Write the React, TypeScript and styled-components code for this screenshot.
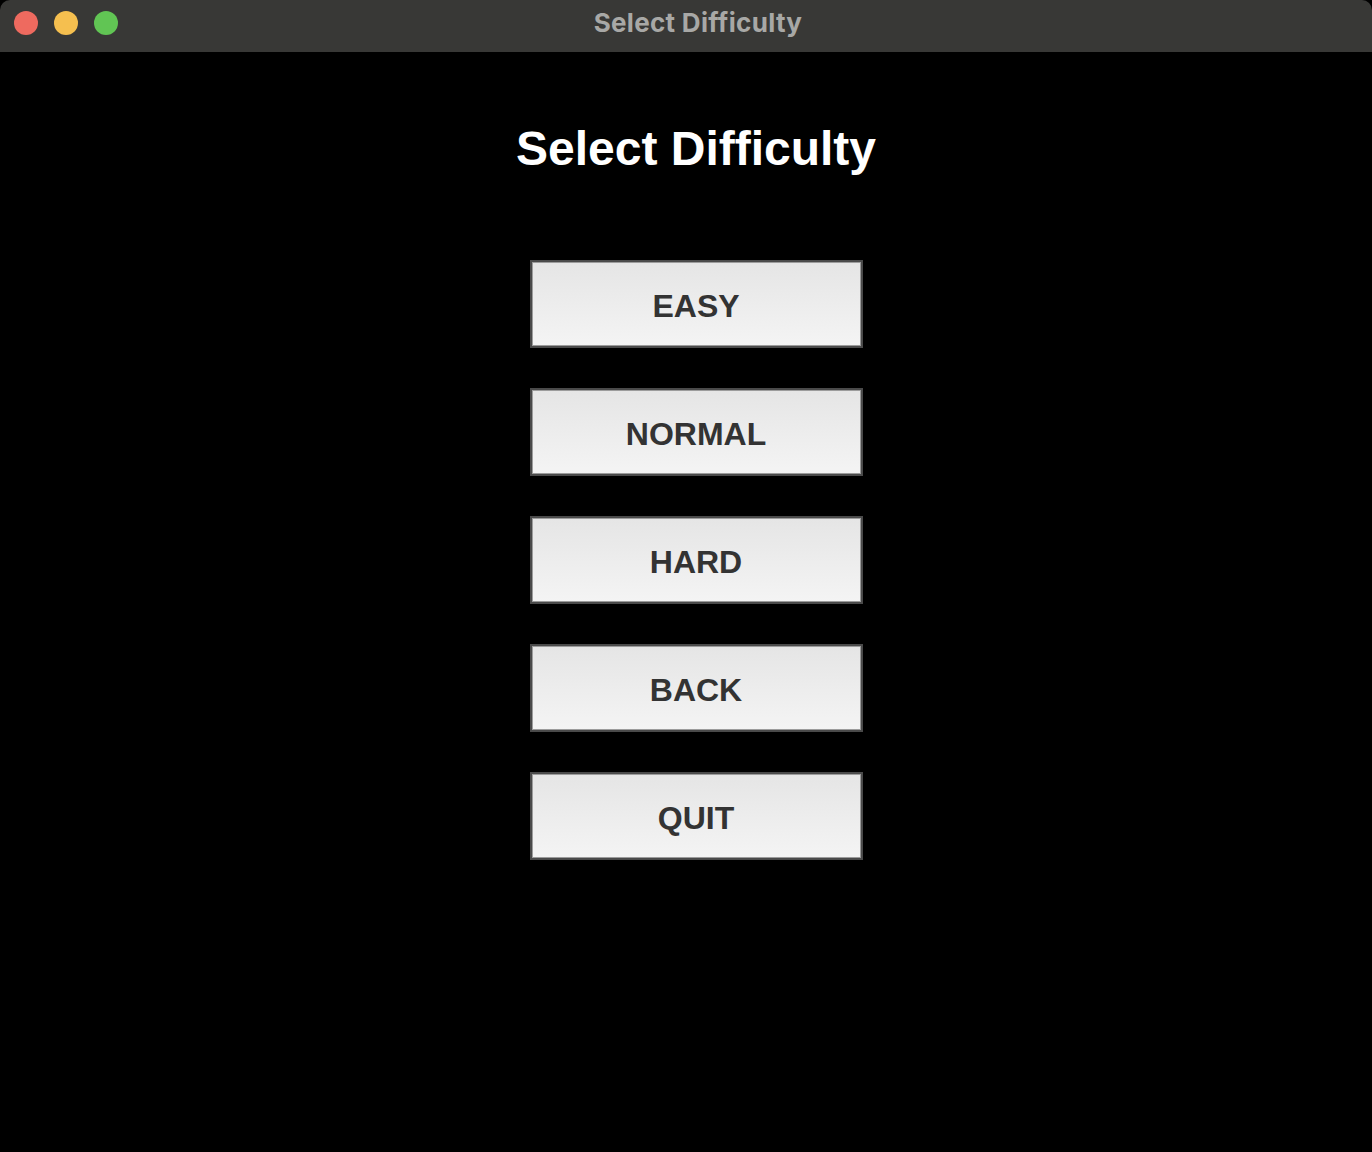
import React from 'react';
import styled, { createGlobalStyle } from 'styled-components';

const GlobalStyle = createGlobalStyle`
  html, body {
    margin: 0;
    padding: 0;
    background: #000;
  }
  #root {
    min-height: 1152px;
  }
`;

const levels = ['EASY', 'NORMAL', 'HARD', 'BACK', 'QUIT'];

const lights = ['#ee6a5f', '#f5bf4f', '#61c554'];

const App = () => {
  return (
    <>
      <GlobalStyle />
      <Window>
        <TitleBar>
          <Lights>
            {lights.map((color) => (
              <Light key={color} color={color} />
            ))}
          </Lights>
          <TitleText>Select Difficulty</TitleText>
        </TitleBar>
        <Content>
          <Heading>Select Difficulty</Heading>
          <Menu>
            {levels.map((level) => (
              <MenuButton key={level}>{level}</MenuButton>
            ))}
          </Menu>
        </Content>
      </Window>
    </>
  );
};

export default App;

const Window = styled.div`
  display: flex;
  flex-direction: column;
  min-height: 1152px;
  background: #000;
`;

const TitleBar = styled.div`
  position: relative;
  height: 52px;
  display: flex;
  align-items: center;
  justify-content: center;
  background: #383836;
  border-top-left-radius: 10px;
  border-top-right-radius: 10px;
`;

const Lights = styled.div`
  position: absolute;
  left: 14px;
  top: 11px;
  display: flex;
  gap: 16px;
`;

const Light = styled.span<{ color: string }>`
  width: 24px;
  height: 24px;
  border-radius: 50%;
  background: ${({ color }) => color};
`;

const TitleText = styled.span`
  font-family: Inter, 'Noto Sans', sans-serif;
  font-size: 26px;
  font-weight: 700;
  letter-spacing: 0.3px;
  color: #a8a8a6;
  margin-left: 24px;
  margin-top: -7px;
`;

const Content = styled.div`
  display: flex;
  flex-direction: column;
  align-items: center;
  padding-top: 69px;
  padding-left: 20px;
`;

const Heading = styled.h1`
  margin: 0;
  font-family: 'Liberation Sans', Arial, sans-serif;
  font-size: 48px;
  font-weight: 700;
  color: #fff;
`;

const Menu = styled.div`
  display: flex;
  flex-direction: column;
  gap: 40px;
  margin-top: 84px;
`;

const MenuButton = styled.button`
  box-sizing: border-box;
  width: 333px;
  height: 88px;
  display: flex;
  align-items: center;
  justify-content: center;
  padding: 4px 0 0;
  border: 2px solid #4a4a4a;
  box-shadow: inset 0 0 0 1px #9c9c9c;
  background: linear-gradient(to bottom, #e5e5e5, #f4f4f4);
  font-family: 'Liberation Sans', Arial, sans-serif;
  font-size: 32px;
  font-weight: 700;
  color: #333;
  cursor: pointer;
`;
